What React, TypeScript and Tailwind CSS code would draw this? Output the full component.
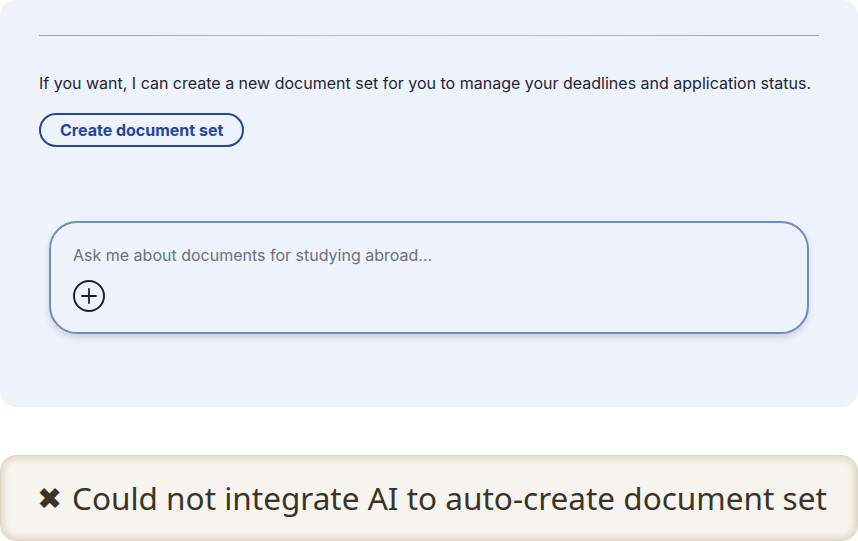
import { Plus } from "lucide-react";

export default function App() {
  return (
    <div className="w-[858px] h-[541px] bg-white flex flex-col overflow-hidden">
      <div className="h-[407px] shrink-0 bg-[#eef2fb] rounded-2xl px-[39px] pt-[35px] font-['Inter',sans-serif]">
        <div className="h-px bg-gradient-to-r from-[#8ea2d0] via-[#b7c0d6] to-[#8ea2d0]" />
        <p className="mt-[37px] text-[16px] leading-[20px] text-[#1f2433]">
          If you want, I can create a new document set for you to manage your deadlines and application status.
        </p>
        <button className="mt-[20px] h-[34px] px-[19px] rounded-full border-2 border-[#2346a0] text-[16px] font-bold text-[#2346a0]">
          Create document set
        </button>
        <div className="mt-[74px] mx-[10px] h-[113px] rounded-[28px] border-2 border-[#7689bf] bg-[#eef2fb] shadow-[0_4px_6px_rgba(60,70,110,0.18)] px-[22px] pt-[22px]">
          <div className="text-[16px] leading-[20px] text-[#6b7080]">
            Ask me about documents for studying abroad...
          </div>
          <div className="mt-[15px] w-[32px] h-[32px] rounded-full border-2 border-[#1c2135] flex items-center justify-center">
            <Plus size={24} strokeWidth={1.8} color="#1c2135" />
          </div>
        </div>
      </div>
      <div className="mt-[48px] h-[86px] shrink-0 rounded-2xl bg-[#f7f4ef] border border-[#ddd5c2] shadow-[inset_0_0_6px_3px_rgba(215,205,180,0.7)] flex items-center pl-[36px] font-['Noto_Sans',sans-serif] text-[31.5px] text-[#38342c]">
        <span className="mr-[10px] text-[30px] leading-none">✖</span>
        <span>Could not integrate AI to auto-create document set</span>
      </div>
    </div>
  );
}
